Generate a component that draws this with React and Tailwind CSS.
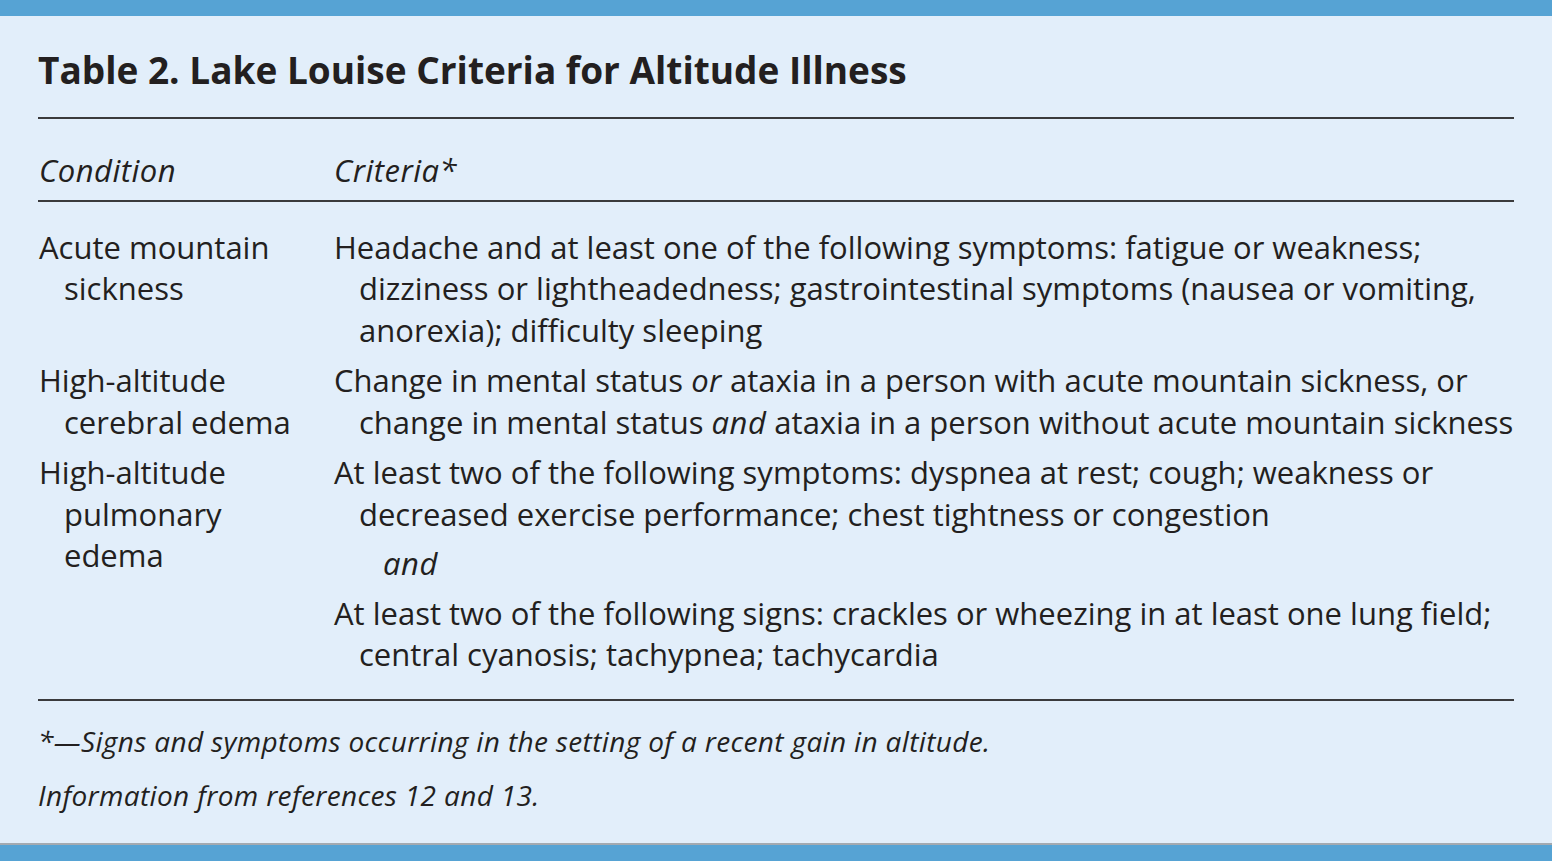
import React from 'react';

const font = { fontFamily: '"Open Sans", "Noto Sans", sans-serif' };

function Rule() {
  return <div className="h-[2px] bg-[#3a3a3c]" />;
}

export default function App() {
  return (
    <div className="w-full h-[861px] bg-[#e2eefa] flex flex-col text-[#231f20]" style={font}>
      <div className="h-[16px] bg-[#56a3d4]" />
      <div className="flex-1 px-[38px]">
        <h1 className="mt-[30px] mb-[23px] text-[37px] leading-[48px] font-bold">
          Table 2. Lake Louise Criteria for Altitude Illness
        </h1>
        <Rule />
        <div className="grid grid-cols-[296px_1fr] pt-[31px] pb-[8px] text-[31px] leading-[41.5px] italic tracking-[0.5px]">
          <div className="pl-px">Condition</div>
          <div>Criteria*</div>
        </div>
        <Rule />
        <div className="pt-[25px] pb-[23px] text-[31px] leading-[41.5px] whitespace-nowrap">
          <div className="grid grid-cols-[296px_1fr]">
            <div className="pl-[26px] indent-[-25px]">Acute mountain<br />sickness</div>
            <div className="pl-[25px] indent-[-25px]">
              Headache and at least one of the following symptoms: fatigue or weakness;<br />
              dizziness or lightheadedness; gastrointestinal symptoms (nausea or vomiting,<br />
              anorexia); difficulty sleeping
            </div>
          </div>
          <div className="grid grid-cols-[296px_1fr] mt-[9px]">
            <div className="pl-[26px] indent-[-25px]">High-altitude<br />cerebral edema</div>
            <div className="pl-[25px] indent-[-25px]">
              Change in mental status <i className="tracking-[0.5px]">or</i> ataxia in a person with acute mountain sickness, or<br />
              change in mental status <i className="tracking-[0.5px]">and</i> ataxia in a person without acute mountain sickness
            </div>
          </div>
          <div className="grid grid-cols-[296px_1fr] mt-[9px]">
            <div className="pl-[26px] indent-[-25px]">High-altitude<br />pulmonary<br />edema</div>
            <div>
              <div className="pl-[25px] indent-[-25px]">
                At least two of the following symptoms: dyspnea at rest; cough; weakness or<br />
                decreased exercise performance; chest tightness or congestion
              </div>
              <div className="pl-[49px] my-[8px] italic tracking-[0.5px]">and</div>
              <div className="pl-[25px] indent-[-25px]">
                At least two of the following signs: crackles or wheezing in at least one lung field;<br />
                central cyanosis; tachypnea; tachycardia
              </div>
            </div>
          </div>
        </div>
        <Rule />
        <div className="pt-[22px] text-[28px] leading-[36px] italic tracking-[0.35px]">
          <p>*—Signs and symptoms occurring in the setting of a recent gain in altitude.</p>
          <p className="mt-[18px]">Information from references 12 and 13.</p>
        </div>
      </div>
      <div className="h-[2px] bg-[#a3aab1]" />
      <div className="h-[16px] bg-[#56a3d4]" />
    </div>
  );
}
